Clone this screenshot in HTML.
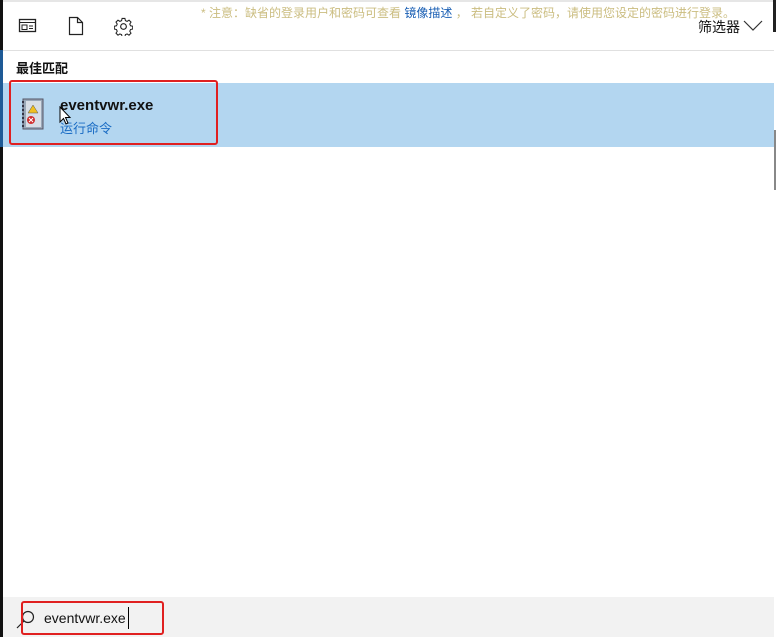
<!DOCTYPE html>
<html><head><meta charset="utf-8"><style>
body{margin:0;width:776px;height:637px;overflow:hidden;background:#fff;position:relative;font-family:"Liberation Sans","Noto Sans CJK SC",sans-serif;}
.a{position:absolute}
</style></head><body>
<div class="a" style="left:0;top:0;width:3px;height:637px;background:#111"></div>
<div class="a" style="left:0;top:50px;width:3px;height:97px;background:#1e5a96"></div>
<div class="a" style="left:3px;top:0;width:771px;height:2px;background:#e6e6e6"></div>
<div class="a" style="left:773px;top:0;width:3px;height:32px;background:#222"></div>
<div class="a" style="left:774px;top:130px;width:2px;height:60px;background:#888"></div>
<svg class="a" style="left:18px;top:18px" width="20" height="16" viewBox="0 0 20 16"><rect x="1.5" y="1.5" width="16" height="12" fill="none" stroke="#222" stroke-width="1.3"/><line x1="1.5" y1="4.5" x2="17.5" y2="4.5" stroke="#222"/><rect x="4" y="7" width="5" height="4.5" fill="none" stroke="#222"/><line x1="11" y1="8" x2="15" y2="8" stroke="#222"/><line x1="11" y1="10.5" x2="15" y2="10.5" stroke="#222"/></svg>
<svg class="a" style="left:68px;top:16px" width="16" height="20" viewBox="0 0 16 20"><path d="M1.5 1.5H9.5L14.5 6.5V18.5H1.5Z M9.5 1.5V6.5H14.5" fill="none" stroke="#222" stroke-width="1.2"/></svg>
<svg class="a" style="left:114px;top:17px" width="19" height="19" viewBox="0 0 20 20"><circle cx="10" cy="10" r="3" fill="none" stroke="#222" stroke-width="1.2"/><path d="M8.5 1.5h3l.5 2.3 1.8.8 2-1.3 2.1 2.1-1.3 2 .8 1.8 2.3.5v3l-2.3.5-.8 1.8 1.3 2-2.1 2.1-2-1.3-1.8.8-.5 2.3h-3l-.5-2.3-1.8-.8-2 1.3-2.1-2.1 1.3-2-.8-1.8-2.3-.5v-3l2.3-.5.8-1.8-1.3-2 2.1-2.1 2 1.3 1.8-.8z" fill="none" stroke="#222" stroke-width="1.1"/></svg>
<div class="a" style="left:201px;top:4px;font-size:12px;color:#cbbd80;white-space:nowrap">* 注意：缺省的登录用户和密码可查看 <span style="color:#1a5fb4">镜像描述</span> ， 若自定义了密码，请使用您设定的密码进行登录。</div>
<div class="a" style="left:698px;top:17px;font-size:14px;color:#111">筛选器</div>
<svg class="a" style="left:743px;top:20px" width="20" height="12" viewBox="0 0 20 12"><path d="M1 1L10 10L19 1" fill="none" stroke="#333" stroke-width="1.2"/></svg>
<div class="a" style="left:3px;top:50px;width:771px;height:1px;background:#e0e0e0"></div>
<div class="a" style="left:16px;top:58px;font-size:13px;font-weight:bold;color:#111">最佳匹配</div>
<div class="a" style="left:3px;top:83px;width:771px;height:64px;background:#b3d6f0"></div>
<svg class="a" style="left:20px;top:97px" width="26" height="36" viewBox="0 0 26 36"><rect x="3" y="2" width="20" height="30" fill="#9aa8b8" stroke="#556" /><rect x="6" y="4" width="15" height="26" fill="#d8dee6"/><path d="M3 4v26" stroke="#334" stroke-width="2" stroke-dasharray="2 2"/><path d="M13 8l5 8h-10z" fill="#f0c020" stroke="#555" stroke-width=".5"/><circle cx="11" cy="23" r="4" fill="#d03030"/><path d="M9 21l4 4M13 21l-4 4" stroke="#fff"/></svg>
<div class="a" style="left:60px;top:97px;font-size:15px;font-weight:bold;color:#111">eventvwr.exe</div>
<div class="a" style="left:60px;top:118px;font-size:13px;color:#1a6cc4">运行命令</div>
<svg class="a" style="left:59px;top:106px" width="14" height="20" viewBox="0 0 14 20"><path d="M1 1V16L4.5 12.5L7 18L9 17L6.5 11.5H11Z" fill="#fff" stroke="#000"/></svg>
<div class="a" style="left:9px;top:80px;width:205px;height:61px;border:2px solid #e02020;border-radius:3px"></div>
<div class="a" style="left:3px;top:597px;width:771px;height:40px;background:#f2f2f2"></div>
<svg class="a" style="left:15px;top:608px" width="22" height="22" viewBox="0 0 22 22"><circle cx="13" cy="9" r="5.5" fill="none" stroke="#222" stroke-width="1.2"/><path d="M9 13L2 20" stroke="#222" stroke-width="1.2"/></svg>
<div class="a" style="left:44px;top:610px;font-size:14px;color:#111">eventvwr.exe</div>
<div class="a" style="left:128px;top:607px;width:1px;height:22px;background:#000"></div>
<div class="a" style="left:21px;top:601px;width:139px;height:30px;border:2px solid #e02020;border-radius:3px"></div>
</body></html>
